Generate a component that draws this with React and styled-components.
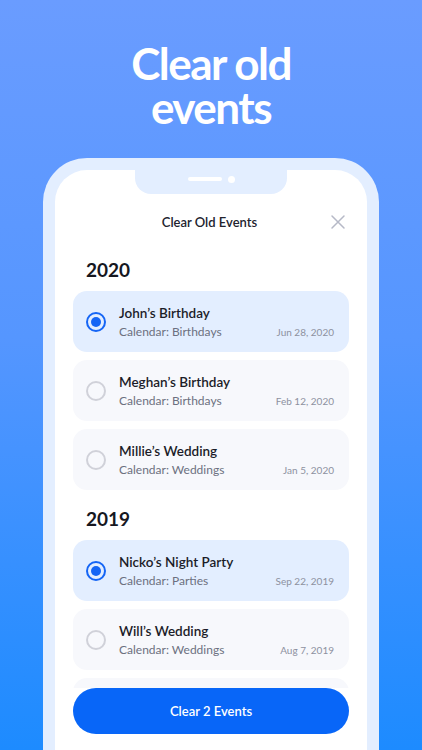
import styled, { createGlobalStyle } from "styled-components";

const GlobalStyle = createGlobalStyle`
  body {
    margin: 0;
    font-family: "Lato", "Inter", sans-serif;
  }
`;

const Page = styled.div`
  width: 422px;
  height: 750px;
  overflow: hidden;
  display: flex;
  flex-direction: column;
  align-items: center;
  background: linear-gradient(180deg, #6a9cff 0%, #5596ff 45%, #1d8bff 100%);
`;

const Headline = styled.h1`
  margin: 0;
  padding-top: 41px;
  color: #ffffff;
  font-size: 44px;
  line-height: 44px;
  font-weight: 700;
  letter-spacing: -1.5px;
  text-align: center;
`;

const Phone = styled.div`
  margin-top: 29px;
  width: 336px;
  flex: 1;
  min-height: 0;
  display: flex;
  padding: 12px 12px 0;
  box-sizing: border-box;
  background: #e3eeff;
  border-radius: 44px 44px 0 0;
`;

const Screen = styled.div`
  flex: 1;
  display: flex;
  flex-direction: column;
  background: #ffffff;
  border-radius: 32px 32px 0 0;
  overflow: hidden;
`;

const Notch = styled.div`
  align-self: center;
  width: 152px;
  height: 24px;
  flex-shrink: 0;
  display: flex;
  align-items: center;
  justify-content: center;
  gap: 6px;
  padding-bottom: 6px;
  box-sizing: border-box;
  background: #e3eeff;
  border-radius: 0 0 16px 16px;
`;

const Speaker = styled.span`
  width: 34px;
  height: 4px;
  border-radius: 2px;
  background: #ffffff;
`;

const Camera = styled.span`
  width: 7px;
  height: 7px;
  border-radius: 50%;
  background: #ffffff;
`;

const Header = styled.div`
  display: grid;
  grid-template-columns: 1fr auto 1fr;
  align-items: center;
  height: 24px;
  margin-top: 16px;
  padding: 0 21px 0 18px;
`;

const HeaderTitle = styled.div`
  grid-column: 2;
  font-size: 13px;
  font-weight: 600;
  color: #22232e;
`;

const CloseButton = styled.button`
  justify-self: end;
  border: none;
  background: none;
  padding: 0;
  width: 16px;
  height: 16px;
  display: flex;
`;

const List = styled.div`
  flex: 1;
  min-height: 0;
  overflow: hidden;
  padding: 0 18px;
`;

const YearTitle = styled.h2`
  margin: ${(p) => (p.$first ? "24px" : "17px")} 0 9px 13px;
  height: 24px;
  line-height: 24px;
  font-size: 19px;
  font-weight: 700;
  color: #16171f;
`;

const Cards = styled.div`
  display: flex;
  flex-direction: column;
  gap: 8px;
`;

const Card = styled.div`
  height: 61px;
  flex-shrink: 0;
  display: flex;
  align-items: center;
  gap: 13px;
  padding: 0 15px 0 13px;
  border-radius: 14px;
  background: ${(p) => (p.$selected ? "#e3eeff" : "#f7f8fc")};
`;

const Radio = styled.span`
  width: 20px;
  height: 20px;
  flex-shrink: 0;
  box-sizing: border-box;
  border-radius: 50%;
  border: 2px solid ${(p) => (p.$checked ? "#1565f5" : "#d0d1d9")};
  display: flex;
  align-items: center;
  justify-content: center;

  &::after {
    content: "";
    width: 10px;
    height: 10px;
    border-radius: 50%;
    background: #1565f5;
    display: ${(p) => (p.$checked ? "block" : "none")};
  }
`;

const Info = styled.div`
  flex: 1;
  display: flex;
  flex-direction: column;
  gap: 3px;
`;

const Name = styled.div`
  font-size: 13.5px;
  font-weight: 600;
  color: #1b1c28;
`;

const Meta = styled.div`
  display: flex;
  justify-content: space-between;
  align-items: baseline;
`;

const CalendarName = styled.span`
  font-size: 12px;
  color: #6c7080;
`;

const DateText = styled.span`
  font-size: 10px;
  color: #8d91a0;
`;

const Footer = styled.div`
  padding: 0 18px 16px;
`;

const ClearButton = styled.button`
  width: 100%;
  height: 46px;
  border: none;
  border-radius: 23px;
  background: #0866f8;
  color: #ffffff;
  font-family: inherit;
  font-size: 13px;
  font-weight: 600;
`;

const groups = [
  {
    year: "2020",
    events: [
      { name: "John’s Birthday", calendar: "Birthdays", date: "Jun 28, 2020", selected: true },
      { name: "Meghan’s Birthday", calendar: "Birthdays", date: "Feb 12, 2020" },
      { name: "Millie’s Wedding", calendar: "Weddings", date: "Jan 5, 2020" },
    ],
  },
  {
    year: "2019",
    events: [
      { name: "Nicko’s Night Party", calendar: "Parties", date: "Sep 22, 2019", selected: true },
      { name: "Will’s Wedding", calendar: "Weddings", date: "Aug 7, 2019" },
    ],
    more: true,
  },
];

export default function App() {
  return (
    <Page>
      <GlobalStyle />
      <Headline>
        Clear old
        <br />
        events
      </Headline>
      <Phone>
        <Screen>
          <Notch>
            <Speaker />
            <Camera />
          </Notch>
          <Header>
            <HeaderTitle>Clear Old Events</HeaderTitle>
            <CloseButton aria-label="Close">
              <svg width="16" height="16" viewBox="0 0 16 16" fill="none">
                <path d="M2 2L14 14M14 2L2 14" stroke="#b6b9c7" strokeWidth="1.5" strokeLinecap="round" />
              </svg>
            </CloseButton>
          </Header>
          <List>
            {groups.map((g, i) => (
              <div key={g.year}>
                <YearTitle $first={i === 0}>{g.year}</YearTitle>
                <Cards>
                  {g.events.map((e) => (
                    <Card key={e.name} $selected={e.selected}>
                      <Radio $checked={e.selected} />
                      <Info>
                        <Name>{e.name}</Name>
                        <Meta>
                          <CalendarName>Calendar: {e.calendar}</CalendarName>
                          <DateText>{e.date}</DateText>
                        </Meta>
                      </Info>
                    </Card>
                  ))}
                  {g.more && <Card />}
                </Cards>
              </div>
            ))}
          </List>
          <Footer>
            <ClearButton>Clear 2 Events</ClearButton>
          </Footer>
        </Screen>
      </Phone>
    </Page>
  );
}
